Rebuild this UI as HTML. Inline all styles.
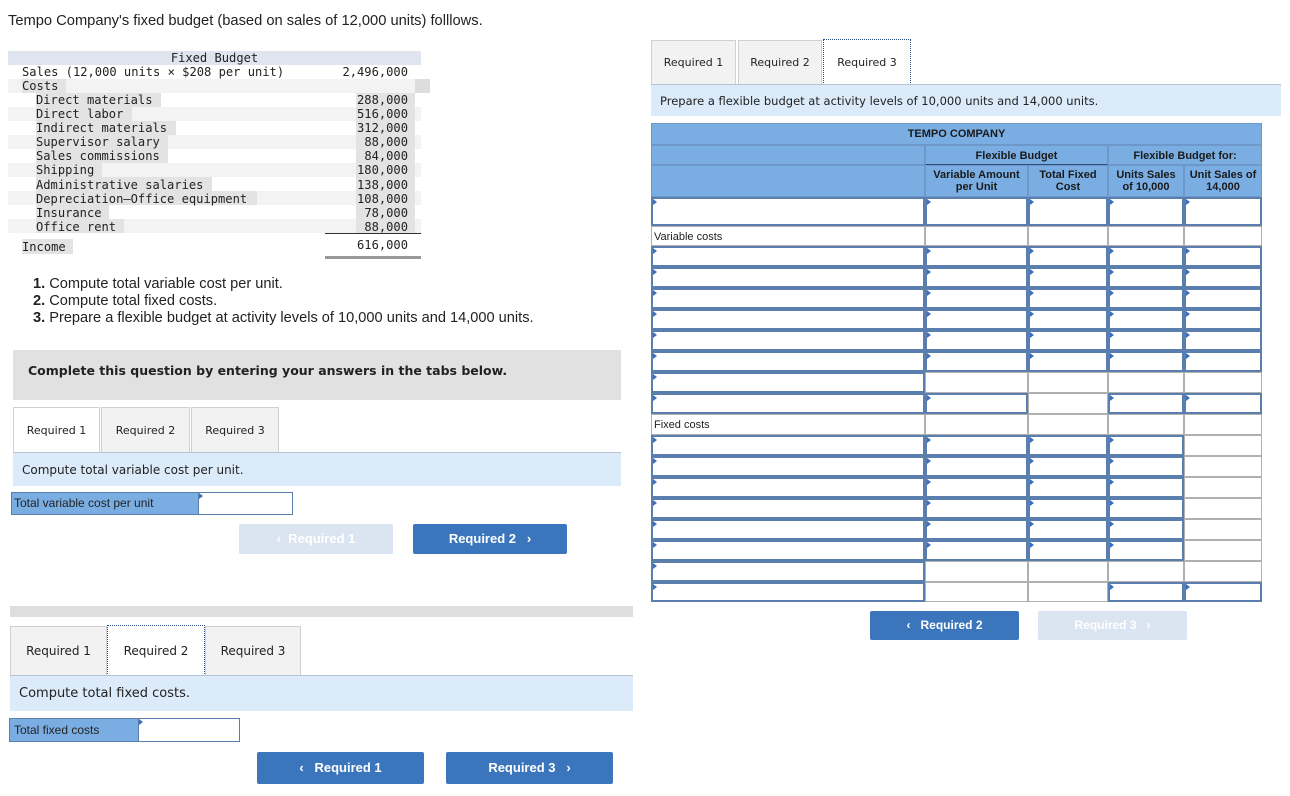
<!DOCTYPE html>
<html><head><meta charset="utf-8"><style>
*{box-sizing:border-box;margin:0;padding:0}
body{width:1290px;height:796px;background:#fff;position:relative;overflow:hidden;font-family:"Liberation Sans",Arial,sans-serif;color:#222}
.a{position:absolute}
.mono{font-family:"DejaVu Sans Mono","Liberation Mono",monospace;font-size:12.1px;line-height:14px;white-space:nowrap}
.v{font-family:"DejaVu Sans","Liberation Sans",sans-serif;font-size:11.5px}
.tab{position:absolute;background:#f2f2f2;border:1px solid #d0d0d0;border-bottom:none;text-align:center;font-family:"DejaVu Sans",sans-serif;font-size:11px;color:#222}
.tab.on{background:#fff}
.tab.dot{border:1px dotted #2a4f88;border-bottom:none;background:#fff}
.band{position:absolute;background:#dcebf9;font-family:"DejaVu Sans",sans-serif;font-size:12px;color:#222;padding-left:9px;border-top:1px solid #b5c3d3}
.btn{position:absolute;background:#3b76bd;color:#fff;font-weight:bold;font-size:13px;text-align:center;border-radius:2px;font-family:"Liberation Sans",Arial,sans-serif}
.btn.dis{background:#dbe5f2}
.inp{position:absolute;background:#fff;border:2px solid #5a7fae}
.inp:before{content:"";position:absolute;left:0;top:0;border-left:4px solid #3a6fc0;border-top:3px solid transparent;border-bottom:3px solid transparent}
.pl{position:absolute;background:#fff;border:1px solid #b0b0b0}
.hd{position:absolute;background:#7aaee3;border:1px solid #6d98c9;font-weight:bold;font-size:11px;text-align:center;color:#1a1a1a;line-height:12px}
</style></head><body>
<div class="a" style="left:8px;top:13px;font-size:14.7px;color:#222">Tempo Company's fixed budget (based on sales of 12,000 units) folllows.</div>

<div class="a" style="left:8px;top:51px;width:413px;height:14px;background:#dfe4ef"></div>
<div class="a mono" style="left:8px;top:51px;width:413px;text-align:center">Fixed Budget</div>
<div class="a" style="left:8px;top:79px;width:413px;height:14px;background:#f3f3f3"></div>
<div class="a" style="left:8px;top:107px;width:413px;height:14px;background:#f3f3f3"></div>
<div class="a" style="left:8px;top:135px;width:413px;height:14px;background:#f3f3f3"></div>
<div class="a" style="left:8px;top:163px;width:413px;height:14px;background:#f3f3f3"></div>
<div class="a" style="left:8px;top:191px;width:413px;height:14px;background:#f3f3f3"></div>
<div class="a" style="left:8px;top:219px;width:413px;height:14px;background:#f3f3f3"></div>
<div class="a" style="left:415px;top:79px;width:15px;height:14px;background:#ddd"></div>
<div class="a" style="left:356px;top:93px;width:59px;height:140px;background:#e3e3e3"></div>
<div class="a" style="left:22px;top:79px;width:44px;height:14px;background:#e3e3e3"></div>
<div class="a" style="left:36px;top:93px;width:125px;height:14px;background:#e3e3e3"></div>
<div class="a" style="left:36px;top:107px;width:96px;height:14px;background:#e3e3e3"></div>
<div class="a" style="left:36px;top:121px;width:140px;height:14px;background:#e3e3e3"></div>
<div class="a" style="left:36px;top:135px;width:132px;height:14px;background:#e3e3e3"></div>
<div class="a" style="left:36px;top:149px;width:132px;height:14px;background:#e3e3e3"></div>
<div class="a" style="left:36px;top:163px;width:66px;height:14px;background:#e3e3e3"></div>
<div class="a" style="left:36px;top:177px;width:176px;height:14px;background:#e3e3e3"></div>
<div class="a" style="left:36px;top:191px;width:221px;height:14px;background:#e3e3e3"></div>
<div class="a" style="left:36px;top:205px;width:73px;height:14px;background:#e3e3e3"></div>
<div class="a" style="left:36px;top:219px;width:88px;height:14px;background:#e3e3e3"></div>
<div class="a" style="left:22px;top:239px;width:51px;height:15px;background:#e3e3e3"></div>
<div class="a" style="left:325px;top:233px;width:96px;height:1px;background:#333"></div>
<div class="a" style="left:325px;top:256px;width:96px;height:3px;background:#999"></div>
<div class="a mono" style="left:22px;top:65px">Sales (12,000 units × $208 per unit)</div>
<div class="a mono" style="left:22px;top:79px">Costs</div>
<div class="a mono" style="left:36px;top:93px;line-height:14.1px">Direct materials<br>Direct labor<br>Indirect materials<br>Supervisor salary<br>Sales commissions<br>Shipping<br>Administrative salaries<br>Depreciation—Office equipment<br>Insurance<br>Office rent</div>
<div class="a mono" style="left:22px;top:240px">Income</div>
<div class="a mono" style="left:300px;top:65px;width:108px;text-align:right">2,496,000</div>
<div class="a mono" style="left:300px;top:93px;width:108px;text-align:right;line-height:14.1px">288,000<br>516,000<br>312,000<br>88,000<br>84,000<br>180,000<br>138,000<br>108,000<br>78,000<br>88,000</div>
<div class="a mono" style="left:300px;top:238px;width:108px;text-align:right">616,000</div>

<div class="a" style="left:33px;top:276px;font-size:14.6px;line-height:17px;color:#222"><b>1.</b> Compute total variable cost per unit.<br><b>2.</b> Compute total fixed costs.<br><b>3.</b> Prepare a flexible budget at activity levels of 10,000 units and 14,000 units.</div>

<div class="a" style="left:13px;top:350px;width:608px;height:50px;background:#e1e1e1"></div>
<div class="a v" style="left:28px;top:363px;font-weight:bold;font-size:12.5px">Complete this question by entering your answers in the tabs below.</div>

<div class="tab on" style="left:13px;top:407px;width:87px;height:46px;line-height:46px">Required 1</div>
<div class="tab" style="left:101px;top:407px;width:89px;height:45px;line-height:45px">Required 2</div>
<div class="tab" style="left:191px;top:407px;width:88px;height:45px;line-height:45px">Required 3</div>
<div class="band" style="left:13px;top:452px;width:608px;height:34px;line-height:34px">Compute total variable cost per unit.</div>
<div class="a" style="left:11px;top:492px;width:188px;height:23px;background:#7aaee3;border:1px solid #5a7fae;font-size:12px;line-height:21px;padding-left:2px">Total variable cost per unit</div>
<div class="inp" style="left:198px;top:492px;width:95px;height:23px;border-width:1px"></div>
<div class="btn dis" style="left:239px;top:524px;width:154px;height:30px;line-height:30px">‹&nbsp;&nbsp;Required 1</div>
<div class="btn" style="left:413px;top:524px;width:154px;height:30px;line-height:30px">Required 2&nbsp;&nbsp;&nbsp;›</div>

<div class="a" style="left:10px;top:606px;width:623px;height:11px;background:#dedede"></div>

<div class="tab" style="left:10px;top:626px;width:97px;height:49px;line-height:49px;font-size:12px">Required 1</div>
<div class="tab dot" style="left:107px;top:625px;width:98px;height:51px;line-height:51px;font-size:12px;border-bottom:1px dotted #2a4f88">Required 2</div>
<div class="tab" style="left:205px;top:626px;width:96px;height:49px;line-height:49px;font-size:12px">Required 3</div>
<div class="band" style="left:10px;top:675px;width:623px;height:36px;line-height:36px;font-size:13px">Compute total fixed costs.</div>
<div class="a" style="left:9px;top:718px;width:130px;height:24px;background:#7aaee3;border:1px solid #5a7fae;font-size:12px;line-height:22px;padding-left:4px">Total fixed costs</div>
<div class="inp" style="left:138px;top:718px;width:102px;height:24px;border-width:1px"></div>
<div class="btn" style="left:257px;top:752px;width:167px;height:32px;line-height:32px">‹&nbsp;&nbsp;&nbsp;Required 1</div>
<div class="btn" style="left:446px;top:752px;width:167px;height:32px;line-height:32px">Required 3&nbsp;&nbsp;&nbsp;›</div>

<div class="tab" style="left:651px;top:40px;width:85px;height:44px;line-height:44px">Required 1</div>
<div class="tab" style="left:738px;top:40px;width:84px;height:44px;line-height:44px">Required 2</div>
<div class="tab dot" style="left:823px;top:39px;width:88px;height:46px;line-height:46px;border-bottom:1px dotted #2a4f88">Required 3</div>
<div class="band" style="left:651px;top:84px;width:630px;height:32px;line-height:32px;font-size:11.5px">Prepare a flexible budget at activity levels of 10,000 units and 14,000 units.</div>

<div class="hd" style="left:651px;top:123px;width:611px;height:22px;line-height:21px">TEMPO COMPANY</div>
<div class="hd" style="left:651px;top:145px;width:274px;height:20px"></div>
<div class="hd" style="left:925px;top:145px;width:183px;height:20px;line-height:20px;border-bottom:1px solid #2d4f7a">Flexible Budget</div>
<div class="hd" style="left:1108px;top:145px;width:154px;height:20px;line-height:20px">Flexible Budget for:</div>
<div class="hd" style="left:651px;top:165px;width:274px;height:32px"></div>
<div class="hd" style="left:925px;top:165px;width:103px;height:32px;padding-top:3px">Variable Amount<br>per Unit</div>
<div class="hd" style="left:1028px;top:165px;width:80px;height:32px;padding-top:3px">Total Fixed<br>Cost</div>
<div class="hd" style="left:1108px;top:165px;width:76px;height:32px;padding-top:3px">Units Sales<br>of 10,000</div>
<div class="hd" style="left:1184px;top:165px;width:78px;height:32px;padding-top:3px">Unit Sales of<br>14,000</div>
<div id="tb"></div>

<div class="btn" style="left:870px;top:611px;width:149px;height:29px;line-height:29px;font-size:12px">‹&nbsp;&nbsp;&nbsp;Required 2</div>
<div class="btn dis" style="left:1038px;top:611px;width:149px;height:29px;line-height:29px;font-size:12px">Required 3&nbsp;&nbsp;&nbsp;›</div>

<script>
var cx=[651,925,1028,1108,1184,1262];
var rows=[[197,29,"iiiii"],[226,20,"nnnnn","Variable costs"]];
for(var i=0;i<6;i++)rows.push([246+21*i,21,"iiiii"]);
rows.push([372,21,"innnn"]);rows.push([393,21,"iinii"]);
rows.push([414,21,"nnnnn","Fixed costs"]);
for(var i=0;i<6;i++)rows.push([435+21*i,21,"iiiin"]);
rows.push([561,21,"innnn"]);rows.push([582,20,"innii"]);
var h="";
rows.forEach(function(r){for(var c=0;c<5;c++){var t=r[2][c];
h+='<div class="'+(t=="i"?"inp":"pl")+'" style="left:'+cx[c]+'px;top:'+r[0]+'px;width:'+(cx[c+1]-cx[c])+'px;height:'+r[1]+'px">'+
(c==0&&r[3]?'<span style="font-size:11px;position:absolute;left:2px;top:4px">'+r[3]+'</span>':'')+'</div>';}});
document.getElementById("tb").innerHTML=h;
</script>
</body></html>
